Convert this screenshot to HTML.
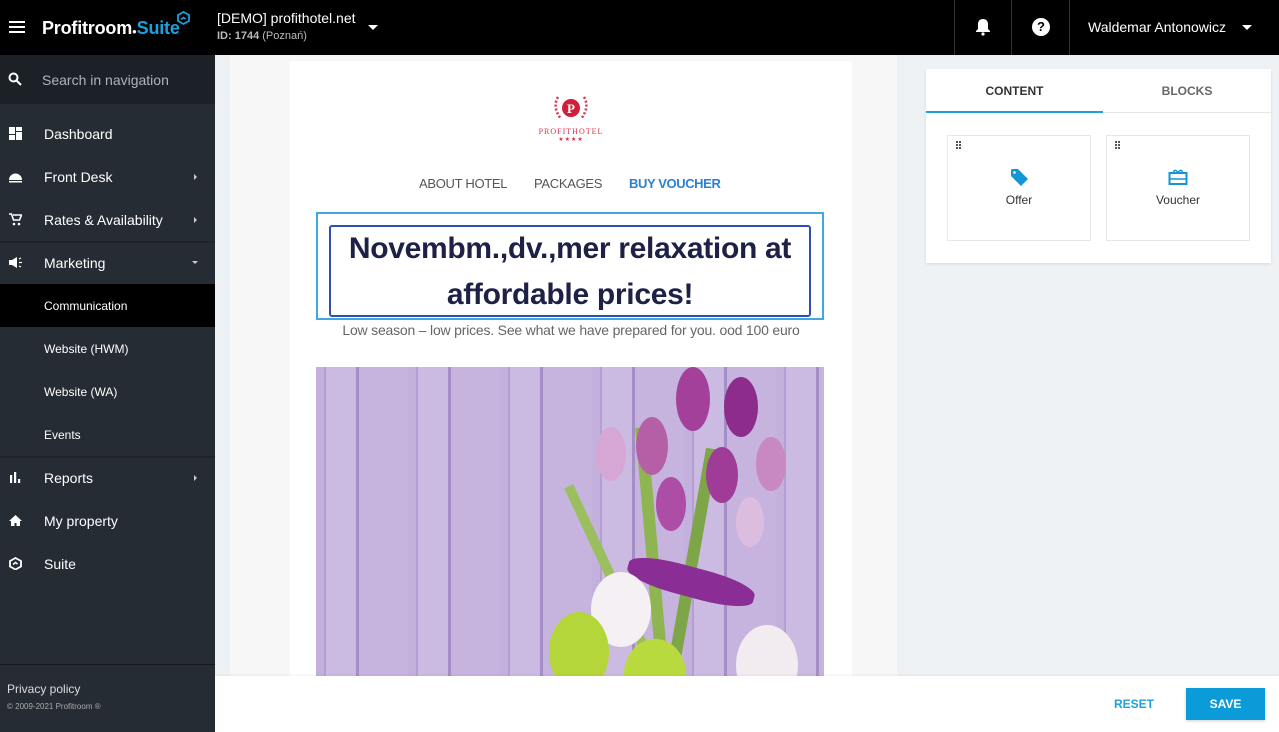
<!DOCTYPE html>
<html><head><meta charset="utf-8"><style>
*{margin:0;padding:0;box-sizing:border-box}
body{width:1279px;height:732px;overflow:hidden;font-family:"Liberation Sans",sans-serif;background:#eef2f5;position:relative}
.top{position:absolute;left:0;top:0;width:1279px;height:55px;background:#000;color:#fff}
.side{position:absolute;left:0;top:55px;width:215px;height:677px;background:#252c33;color:#fff}
.search{height:49px;background:#1b2127;display:flex;align-items:center;padding-left:42px;font-size:14px;color:#aeb4b9;position:relative;margin-bottom:8px}
.item{height:43px;display:flex;align-items:center;padding-left:44px;font-size:14px;position:relative}
.item.sub{font-size:12px}
.item.act{background:#000}
.arr{position:absolute;right:18px;top:19px;width:0;height:0;border-left:3px solid #ccc;border-top:3px solid transparent;border-bottom:3px solid transparent}
.arrd{position:absolute;right:17px;top:20px;border-top:3px solid #ccc;border-left:3px solid transparent;border-right:3px solid transparent}
.ic{position:absolute;left:9px;top:15px;width:13px;height:13px}
.sep{box-shadow:inset 0 2px #1e242a}
</style></head><body>
<div class="top">
 <div style="position:absolute;left:9px;top:21px;width:16px;height:2px;background:#fff;box-shadow:0 5px #fff,0 10px #fff"></div>
 <div style="position:absolute;left:42px;top:18px;font-size:18px;font-weight:bold;letter-spacing:-0.2px">Profitroom<span style="font-size:8px">●</span><span style="color:#1ea0dc">Suite</span></div>
 <svg style="position:absolute;left:176px;top:11px" width="15" height="15" viewBox="0 0 15 15"><path d="M7.5 1L13 4v6l-5.5 3L2 10V4z" fill="none" stroke="#1ea0dc" stroke-width="1.8"/><path d="M5 8.5l2.5-2 2 1.5" fill="none" stroke="#1ea0dc" stroke-width="1.6"/></svg>
 <div style="position:absolute;left:217px;top:10px;font-size:14px">[DEMO] profithotel.net</div>
 <div style="position:absolute;left:217px;top:30px;font-size:11px;color:#bbb"><b>ID: 1744</b> (Poznań)</div>
 <div style="position:absolute;left:368px;top:25px;border-top:5px solid #fff;border-left:5px solid transparent;border-right:5px solid transparent"></div>
 <div style="position:absolute;left:954px;top:0;width:1px;height:55px;background:#333"></div>
 <div style="position:absolute;left:1011px;top:0;width:1px;height:55px;background:#333"></div>
 <div style="position:absolute;left:1069px;top:0;width:1px;height:55px;background:#333"></div>
 <svg style="position:absolute;left:975px;top:18px" width="16" height="18" viewBox="0 0 16 18"><path d="M8 1c-3 0-5 2-5 5v5l-2 2v1h14v-1l-2-2V6c0-3-2-5-5-5z" fill="#fff"/><circle cx="8" cy="16" r="1.6" fill="#fff"/></svg>
 <div style="position:absolute;left:1032px;top:18px;width:18px;height:18px;border-radius:50%;background:#fff;color:#000;font-size:13px;font-weight:bold;text-align:center;line-height:18px">?</div>
 <div style="position:absolute;left:1088px;top:19px;font-size:14px">Waldemar Antonowicz</div>
 <div style="position:absolute;left:1242px;top:25px;border-top:5px solid #fff;border-left:5px solid transparent;border-right:5px solid transparent"></div>
</div>
<div class="side">
 <div class="search"><svg style="position:absolute;left:8px;top:17px" width="14" height="14" viewBox="0 0 14 14"><circle cx="5.5" cy="5.5" r="4" fill="none" stroke="#fff" stroke-width="2"/><path d="M8.5 8.5l4.5 4.5" stroke="#fff" stroke-width="2"/></svg>Search in navigation</div>
 <div class="item"><svg class="ic" viewBox="0 0 13 13"><rect x="0" y="0" width="6" height="7" fill="#fff"/><rect x="7" y="0" width="6" height="4" fill="#fff"/><rect x="0" y="8" width="6" height="5" fill="#fff"/><rect x="7" y="5" width="6" height="8" fill="#fff"/></svg>Dashboard</div>
 <div class="item"><svg class="ic" viewBox="0 0 13 13"><path d="M0 10a6.5 6.5 0 0 1 13 0zM0 11h13v1.5H0z" fill="#fff"/></svg>Front Desk<span class="arr"></span></div>
 <div class="item"><svg class="ic" viewBox="0 0 13 13"><path d="M0 1h2.5l2 6h6l2-5H4" fill="none" stroke="#fff" stroke-width="1.6"/><circle cx="5" cy="11" r="1.3" fill="#fff"/><circle cx="10" cy="11" r="1.3" fill="#fff"/></svg>Rates &amp; Availability<span class="arr"></span></div>
 <div class="item sep"><svg class="ic" viewBox="0 0 13 13"><path d="M0 4h3l5-3v11L3 9H0z" fill="#fff"/><path d="M10 3l2-1M10 6.5h3M10 10l2 1" stroke="#fff" stroke-width="1.2"/></svg>Marketing<span class="arrd"></span></div>
 <div class="item sub act">Communication</div>
 <div class="item sub">Website (HWM)</div>
 <div class="item sub">Website (WA)</div>
 <div class="item sub">Events</div>
 <div class="item sep"><svg class="ic" viewBox="0 0 13 13"><rect x="1" y="4" width="2.2" height="8" fill="#fff"/><rect x="5" y="1" width="2.2" height="11" fill="#fff"/><rect x="9" y="8" width="2.2" height="4" fill="#fff"/></svg>Reports<span class="arr"></span></div>
 <div class="item"><svg class="ic" viewBox="0 0 13 13"><path d="M6.5 1L0 7h2v5h3.5V9h2v3H11V7h2z" fill="#fff"/></svg>My property</div>
 <div class="item"><svg class="ic" viewBox="0 0 13 13"><path d="M6.5 1L12 4v5.5L6.5 12.5 1 9.5V4z" fill="none" stroke="#fff" stroke-width="1.8"/><path d="M4 7.5l2.5-2 2 1.5" fill="none" stroke="#fff" stroke-width="1.5"/></svg>Suite</div>
 <div style="position:absolute;left:0;top:609px;width:215px;border-top:1px solid #151a1f"></div>
 <div style="position:absolute;left:7px;top:627px;font-size:12px;color:#ddd">Privacy policy</div>
 <div style="position:absolute;left:7px;top:647px;font-size:8px;color:#aaa">© 2009-2021 Profitroom ®</div>
</div>
<div style="position:absolute;left:215px;top:55px;width:697px;height:621px;background:#eef1f3"></div>
<div style="position:absolute;left:230px;top:55px;width:667px;height:621px;background:#f7f7f7"></div>
<div style="position:absolute;left:290px;top:61px;width:562px;height:615px;background:#fff"></div>
<svg style="position:absolute;left:550px;top:93px" width="42" height="34" viewBox="0 0 42 34"><path d="M8 4q-6 10 3 22M34 4q6 10-3 22" fill="none" stroke="#d8324a" stroke-width="2.5" stroke-dasharray="2 2"/><circle cx="21" cy="15" r="9" fill="#d01f3a"/><text x="21" y="20" text-anchor="middle" font-family="Liberation Serif" font-size="13" font-weight="bold" fill="#fff">P</text></svg>
<div style="position:absolute;left:530px;top:127px;width:82px;text-align:center;font-family:'Liberation Serif',serif;font-size:8px;color:#d8324a;letter-spacing:1px">PROFITHOTEL</div>
<div style="position:absolute;left:530px;top:136px;width:82px;text-align:center;font-size:6px;color:#d8324a;letter-spacing:1px">★★★★</div>
<div style="position:absolute;left:419px;top:176px;font-size:13px;color:#555;letter-spacing:-0.3px">ABOUT HOTEL</div>
<div style="position:absolute;left:534px;top:176px;font-size:13px;color:#555;letter-spacing:-0.3px">PACKAGES</div>
<div style="position:absolute;left:629px;top:176px;font-size:13px;color:#2d7fd6;font-weight:bold;letter-spacing:-0.4px">BUY VOUCHER</div>
<div style="position:absolute;left:316px;top:212px;width:508px;height:108px;border:2px solid #3fa8e3"></div>
<div style="position:absolute;left:329px;top:225px;width:482px;height:92px;border:2px solid #2e4fb8;border-radius:3px"></div>
<div style="position:absolute;left:316px;top:226px;width:508px;text-align:center;font-size:30px;font-weight:bold;color:#1c2145;line-height:46px;letter-spacing:-0.3px">Novembm.,dv.,mer relaxation at<br>affordable prices!</div>
<div style="position:absolute;left:290px;top:322px;width:562px;text-align:center;font-size:14px;color:#666;letter-spacing:-0.2px">Low season – low prices. See what we have prepared for you. ood 100 euro</div>
<div style="position:absolute;left:316px;top:367px;width:508px;height:309px;overflow:hidden;background:repeating-linear-gradient(90deg,#c3b0dc 0 8px,#b59fd2 8px 10px,#cbbbe2 10px 40px,#a58ec6 40px 43px,#c6b4df 43px 92px)">
 <div style="position:absolute;left:330px;top:60px;width:12px;height:250px;background:#8fb552;transform:rotate(-5deg)"></div>
 <div style="position:absolute;left:370px;top:80px;width:12px;height:230px;background:#7ea648;transform:rotate(10deg)"></div>
 <div style="position:absolute;left:290px;top:110px;width:10px;height:200px;background:#9bbf60;transform:rotate(-25deg)"></div>
 <div style="position:absolute;left:360px;top:0;width:34px;height:64px;border-radius:50%;background:#a3409a"></div>
 <div style="position:absolute;left:408px;top:10px;width:34px;height:60px;border-radius:50%;background:#8c2d8c"></div>
 <div style="position:absolute;left:320px;top:50px;width:32px;height:58px;border-radius:50%;background:#b560a6"></div>
 <div style="position:absolute;left:280px;top:60px;width:30px;height:54px;border-radius:50%;background:#d6a7d4"></div>
 <div style="position:absolute;left:390px;top:80px;width:32px;height:56px;border-radius:50%;background:#9f3c97"></div>
 <div style="position:absolute;left:440px;top:70px;width:30px;height:54px;border-radius:50%;background:#c888c2"></div>
 <div style="position:absolute;left:340px;top:110px;width:30px;height:54px;border-radius:50%;background:#ad4da6"></div>
 <div style="position:absolute;left:420px;top:130px;width:28px;height:50px;border-radius:50%;background:#dcbde0"></div>
 <div style="position:absolute;left:310px;top:200px;width:130px;height:30px;border-radius:40%;background:#8a2d95;transform:rotate(15deg)"></div>
 <div style="position:absolute;left:275px;top:205px;width:60px;height:75px;border-radius:50%;background:#f4f0f4"></div>
 <div style="position:absolute;left:233px;top:245px;width:60px;height:80px;border-radius:50%;background:#b5d63a"></div>
 <div style="position:absolute;left:308px;top:272px;width:62px;height:70px;border-radius:50%;background:#b9da3e"></div>
 <div style="position:absolute;left:420px;top:258px;width:62px;height:80px;border-radius:50%;background:#f2ecf1"></div>
</div>
<div style="position:absolute;left:926px;top:69px;width:345px;height:194px;background:#fff;box-shadow:0 1px 3px rgba(0,0,0,.1)"></div>
<div style="position:absolute;left:926px;top:84px;width:177px;text-align:center;font-size:12px;font-weight:bold;color:#333">CONTENT</div>
<div style="position:absolute;left:1103px;top:84px;width:168px;text-align:center;font-size:12px;font-weight:bold;color:#666">BLOCKS</div>
<div style="position:absolute;left:926px;top:111px;width:177px;height:2px;background:#1ea0dc"></div>
<div style="position:absolute;left:1103px;top:112px;width:168px;height:1px;background:#e3e8ec"></div>
<div style="position:absolute;left:947px;top:135px;width:144px;height:106px;border:1px solid #e3e8ec"></div>
<div style="position:absolute;left:1106px;top:135px;width:144px;height:106px;border:1px solid #e3e8ec"></div>
<div style="position:absolute;left:956px;top:141px;width:2px;height:2px;background:#555;box-shadow:3px 0 #555,0 3px #555,3px 3px #555,0 6px #555,3px 6px #555"></div>
<div style="position:absolute;left:1115px;top:141px;width:2px;height:2px;background:#555;box-shadow:3px 0 #555,0 3px #555,3px 3px #555,0 6px #555,3px 6px #555"></div>
<svg style="position:absolute;left:1010px;top:168px" width="19" height="19" viewBox="0 0 19 19"><path d="M1 2v6l10 10 7-7L8 1H2z" fill="#1296d6"/><circle cx="4.5" cy="4.5" r="1.3" fill="#fff"/></svg>
<div style="position:absolute;left:947px;top:193px;width:144px;text-align:center;font-size:12px;color:#333">Offer</div>
<svg style="position:absolute;left:1168px;top:168px" width="20" height="18" viewBox="0 0 20 18"><rect x="1.5" y="5" width="17" height="11" fill="none" stroke="#1296d6" stroke-width="2"/><path d="M1.5 11h17" stroke="#1296d6" stroke-width="1.5"/><path d="M10 5C8 1 5 2 6 5M10 5c2-4 5-3 4 0" fill="none" stroke="#1296d6" stroke-width="1.5"/></svg>
<div style="position:absolute;left:1106px;top:193px;width:144px;text-align:center;font-size:12px;color:#333">Voucher</div>
<div style="position:absolute;left:215px;top:676px;width:1064px;height:56px;background:#fff;box-shadow:0 -1px 2px rgba(0,0,0,.05)"></div>
<div style="position:absolute;left:1114px;top:697px;font-size:12px;font-weight:bold;color:#1ea0dc">RESET</div>
<div style="position:absolute;left:1186px;top:688px;width:79px;height:32px;background:#0a9bd8;color:#fff;font-size:12px;font-weight:bold;text-align:center;line-height:32px;box-shadow:0 1px 3px rgba(0,0,0,.2)">SAVE</div>
</body></html>
